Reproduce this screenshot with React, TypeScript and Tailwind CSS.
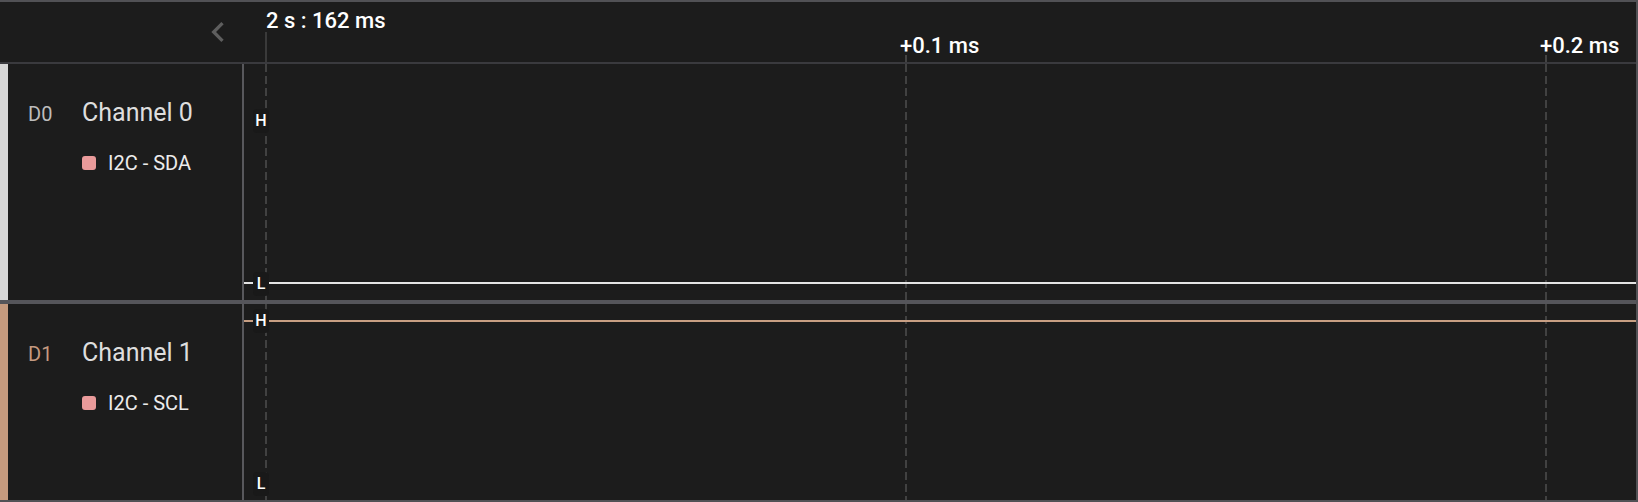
import React from 'react';

interface Channel {
  id: string;
  name: string;
  analyzer: string;
  strip: string;
  idColor: string;
  lineColor: string;
  lineY: number;
  height: string;
  hTop: string;
  lTop: string;
}

const channels: Channel[] = [
  {
    id: 'D0',
    name: 'Channel 0',
    analyzer: 'I2C - SDA',
    strip: 'bg-[#d6d6d6]',
    idColor: 'text-[#bdbdbd]',
    lineColor: '#e4e4e4',
    lineY: 219,
    height: 'h-[236px]',
    hTop: 'top-[45px]',
    lTop: 'top-[208px]',
  },
  {
    id: 'D1',
    name: 'Channel 1',
    analyzer: 'I2C - SCL',
    strip: 'bg-[#c59a7e]',
    idColor: 'text-[#c49a80]',
    lineColor: '#c89f83',
    lineY: 17,
    height: 'h-[196px]',
    hTop: 'top-[5px]',
    lTop: 'top-[168px]',
  },
];

// grid x positions inside the waveform canvas (canvas starts at page x 244)
const gridX = [22, 662, 1302];

function LevelLabel({ text, top }: { text: string; top: string }) {
  return (
    <div
      className={`absolute left-[9px] ${top} flex h-[24px] w-[16px] items-center justify-center rounded-[4px] bg-[#191919] text-[16px] font-medium leading-none text-white`}
    >
      {text}
    </div>
  );
}

function ChannelRow({ ch }: { ch: Channel }) {
  return (
    <div className={`flex ${ch.height}`}>
      <div className="flex w-[244px] shrink-0 border-r-2 border-[#58585c]">
        <div className={`w-[8px] shrink-0 ${ch.strip}`} />
        <div className="pl-[20px] pt-[36px]">
          <div className="flex items-baseline">
            <span className={`w-[54px] text-[20px] leading-none ${ch.idColor}`}>{ch.id}</span>
            <span className="text-[25px] leading-none text-[#dedede]">{ch.name}</span>
          </div>
          <div className="mt-[28px] flex items-center gap-[12px] pl-[54px]">
            <span className="h-[14px] w-[14px] rounded-[3px] bg-[#e99a9a]" />
            <span className="text-[20px] leading-none text-[#ececec]">{ch.analyzer}</span>
          </div>
        </div>
      </div>

      <div className="relative flex-1">
        <svg className="absolute inset-0 h-full w-full">
          {gridX.map((x) => (
            <line key={x} x1={x} x2={x} y1={0} y2="100%" stroke="#414141" strokeWidth={2} strokeDasharray="8 4" />
          ))}
          <line x1={0} x2="100%" y1={ch.lineY} y2={ch.lineY} stroke={ch.lineColor} strokeWidth={2} />
        </svg>
        <LevelLabel text="H" top={ch.hTop} />
        <LevelLabel text="L" top={ch.lTop} />
      </div>
    </div>
  );
}

export default function App() {
  return (
    <div className="flex h-[502px] w-[1638px] flex-col border-y-2 border-r-2 border-[#515155] bg-[#1c1c1c] font-[Roboto,sans-serif]">
      {/* time axis header */}
      <div className="flex h-[62px] shrink-0 border-b-2 border-[#3a3a3e]">
        <div className="flex w-[244px] shrink-0 items-center justify-end pr-[6px]">
          <svg viewBox="0 0 24 24" className="h-[40px] w-[40px]" fill="#5e5e5e">
            <path d="M15.41 7.41L14 6l-6 6 6 6 1.41-1.41L10.83 12z" />
          </svg>
        </div>
        <div className="relative flex-1">
          <div className="absolute left-[21px] top-[30px] h-[30px] w-[2px] bg-[#3a3a3a]" />
          <div className="absolute left-[661px] top-[53px] h-[7px] w-[2px] bg-[#444]" />
          <div className="absolute left-[1301px] top-[53px] h-[7px] w-[2px] bg-[#444]" />
          <span className="absolute left-[22px] top-[8px] text-[22px] font-medium leading-none text-white">
            2 s : 162 ms
          </span>
          <span className="absolute left-[656px] top-[33px] text-[22px] font-medium leading-none text-white">
            +0.1 ms
          </span>
          <span className="absolute left-[1296px] top-[33px] text-[22px] font-medium leading-none text-white">
            +0.2 ms
          </span>
        </div>
      </div>

      <ChannelRow ch={channels[0]} />
      <div className="h-[4px] shrink-0 bg-[#55555a]" />
      <ChannelRow ch={channels[1]} />
    </div>
  );
}
